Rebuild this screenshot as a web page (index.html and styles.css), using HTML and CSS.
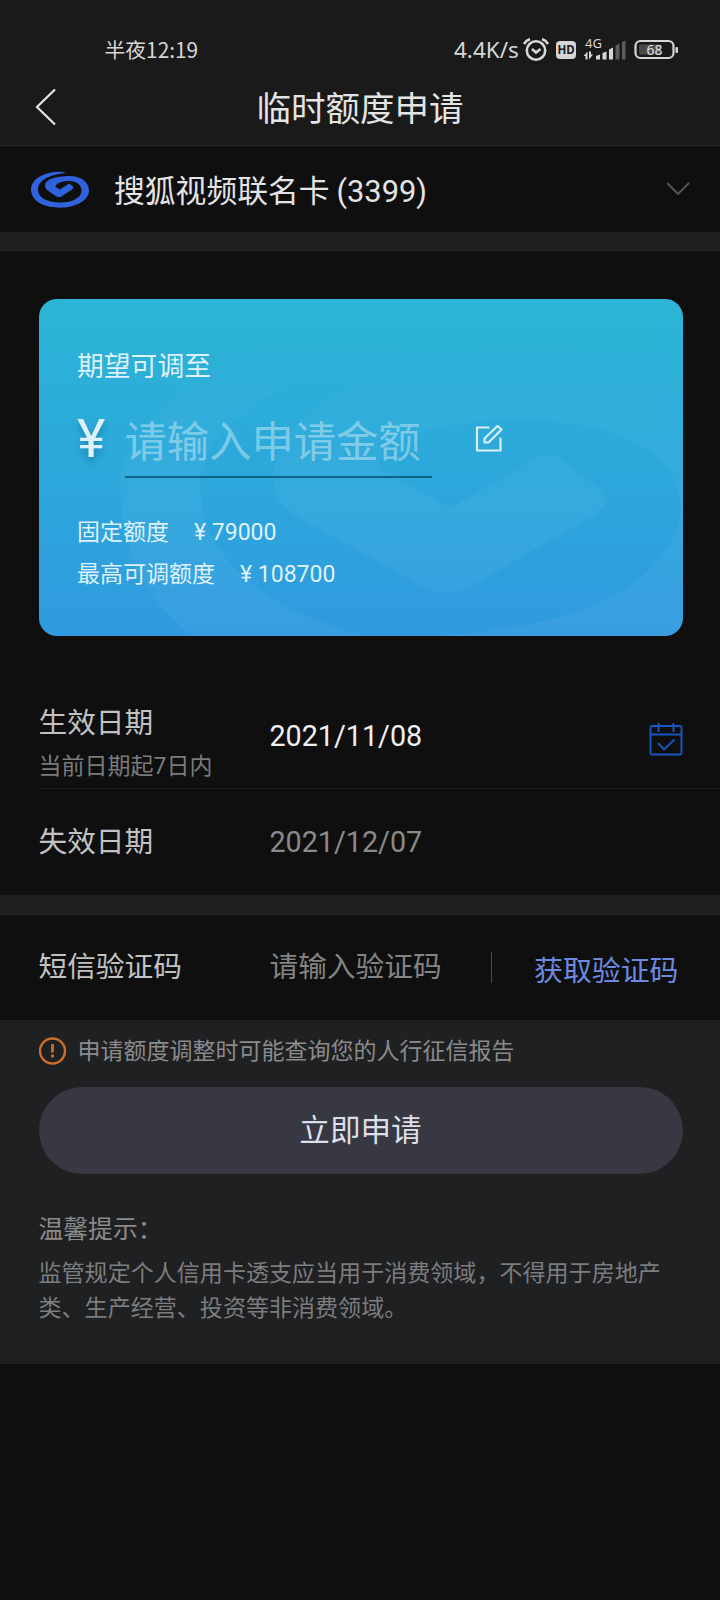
FILE: index.html
```html
<!DOCTYPE html>
<html lang="zh-CN">
<head>
<meta charset="utf-8">
<title>临时额度申请</title>
<link rel="stylesheet" href="styles.css">
</head>
<body>
<header class="header">
  <div class="status">
    <span class="clock">半夜12:19</span>
    <span class="speed">4.4K/s</span>
    <svg class="status-icons" width="160" height="30" viewBox="520 35 160 30">
      <g fill="none" stroke="#d6d6d6" stroke-width="2.6">
        <circle cx="536" cy="50.500" r="9.200"/>
        <path d="M532 49l4 3.500 4.500-3.500"/>
        <path d="M524 44q2-3.500 6-5M548 44q-2-3.500-6-5"/>
      </g>
      <rect x="556" y="41" width="20" height="18" rx="4" fill="#d6d6d6"/>
      <text x="566" y="53.800" class="hd">HD</text>
      <text x="585" y="48" class="net">4G</text>
      <g fill="#d6d6d6">
        <path d="M583.500 56l4-4.500v8h-2v-3.500zM593 54.500l-1.500 2-2.500 3v-8h2v3z"/>
        <path d="M596 56l4-1.500v5h-4zM602.500 53l4-1.500v8h-4zM609 49.500l4-2v12h-4z"/>
        <path fill="#5c5c5c" d="M615.500 45.500l4-2v16h-4zM622 42l3.500-1.500v19H622z"/>
      </g>
      <rect x="635.500" y="41" width="38" height="17" rx="5" fill="none" stroke="#d6d6d6" stroke-width="2.200"/>
      <rect x="639" y="44.500" width="22" height="10" rx="1" fill="#4a4a4a"/>
      <rect x="675.500" y="47" width="2.500" height="6" rx="1" fill="#d6d6d6"/>
      <text x="654.500" y="54.800" class="battery">68</text>
    </svg>
  </div>
  <div class="nav">
    <svg class="back" width="22" height="38" viewBox="0 0 22 38"><path d="M20 1.500L2 19l18 17.500" fill="none" stroke="#e6e6e6" stroke-width="2.200"/></svg>
    <h1 class="title">临时额度申请</h1>
  </div>
</header>

<section class="account">
  <svg class="logo" width="58" height="38" viewBox="0 0 58 38">
    <path fill="#2f62dc" d="M36 3C31 1.500 25 1 18 3 8 5.500 0 11 0 19.500 0 31 13 37.700 28.500 37.700S58 31 58 20.500C58 12 50 6 38 6 25 6 14 9.500 14 15.500c0 3 2 4.500 4 6l7.500 5q2.500 1.500 5 0l11-7.500q2-1.500 0-3L38 13.500l-9 6-4.500-2.500c0-3.500 6-6 13.500-6 8 0 12.500 4 12.500 9.500 0 7.500-9 12-21.500 12C16 32.500 7 27.500 7 19.500 7 11 17 4.500 36 3z"/>
  </svg>
  <span class="account-name">搜狐视频联名卡 <span class="num">(3399)</span></span>
  <svg width="26" height="16" viewBox="0 0 26 16"><path d="M2 2l11 11L24 2" fill="none" stroke="#565656" stroke-width="1.800"/></svg>
</section>

<section class="quota-wrap">
  <div class="quota">
    <svg class="mark" width="644" height="337" viewBox="38.500 299 644 337">
      <defs>
        <linearGradient id="fade" gradientUnits="userSpaceOnUse" x1="0" y1="330" x2="0" y2="500">
          <stop offset="0" stop-color="#fff" stop-opacity="0"/>
          <stop offset="1" stop-color="#fff" stop-opacity=".042"/>
        </linearGradient>
      </defs>
      <path fill="url(#fade)" d="M683 315C640 305 560 300 480 305 280 315 120 390 120 490c0 60 25 110 72 146H365C265 610 200 560 200 485c0-40 40-90 150-125 90-25 200-40 333-45z"/>
      <path fill="url(#fade)" d="M683 370C620 352 560 348 500 350 380 355 273 410 273 480c0 20 12 30 30 40l122 68q20 9 42 0l130-75q15-13 0-26l-40-30q-9-6-20 0L450 508l-70-40C370 440 440 420 520 420c100 0 160 35 160 85 0 75-100 125-250 131H683z"/>
    </svg>
    <p class="quota-label">期望可调至</p>
    <div class="amount">
      <span class="yen">¥</span>
      <span class="amount-input">请输入申请金额</span>
      <svg class="edit" width="28" height="29" viewBox="0 0 28 29" fill="none" stroke="#d9f0fa" stroke-width="2.200"><path d="M14.500 3.500H2v23h23.500V13.500"/><path d="M9.500 18.500v-4L22.500 2l4 3.500L13.500 18.500z" stroke-linejoin="round"/></svg>
    </div>
    <p class="limit">固定额度<span class="num limit-value">¥ 79000</span></p>
    <p class="limit">最高可调额度<span class="num limit-value">¥ 108700</span></p>
  </div>
</section>

<section class="dates">
  <div class="row row-start">
    <div class="label-col"><div class="label">生效日期</div><div class="hint">当前日期起<span class="num">7</span>日内</div></div>
    <span class="date num">2021/11/08</span>
    <svg class="calendar" width="34" height="34" viewBox="0 0 34 34" fill="none" stroke="#1757c0" stroke-width="1.900"><rect x="1.500" y="4" width="31" height="28.500" rx="1.500"/><path d="M1.500 12.500h31M9.500 1v9M24.500 1v9M9 21l6 6.500L25.500 17.500"/></svg>
  </div>
  <div class="row row-end">
    <div class="label-col"><div class="label">失效日期</div></div>
    <span class="date date-off num">2021/12/07</span>
  </div>
</section>

<section class="sms">
  <div class="label-col"><div class="label">短信验证码</div></div>
  <span class="code-input">请输入验证码</span>
  <span class="bar"></span>
  <a class="get-code">获取验证码</a>
</section>

<section class="footer">
  <div class="notice">
    <svg width="28" height="28" viewBox="0 0 28 28"><circle cx="13.500" cy="14" r="12.500" fill="none" stroke="#c96f2c" stroke-width="2.400"/><path d="M13.500 7v8.500M13.500 17.500v3" stroke="#c96f2c" stroke-width="2.800"/></svg>
    <span class="notice-text">申请额度调整时可能查询您的人行征信报告</span>
  </div>
  <div class="submit">立即申请</div>
  <h2 class="tips-title">温馨提示：</h2>
  <p class="tips">监管规定个人信用卡透支应当用于消费领域，不得用于房地产类、生产经营、投资等非消费领域。</p>
</section>
</body>
</html>
```

FILE: styles.css
```css
* { box-sizing: border-box; }
body {
  margin: 0;
  width: 720px;
  height: 1600px;
  overflow: hidden;
  background: #0f0f0f;
  color: #e4e4e4;
  font-family: "Noto Sans CJK SC", sans-serif;
}
h1, h2, p { margin: 0; font-weight: 400; }
svg { display: block; flex: none; }
.num { font-family: Roboto, sans-serif; }

.header { height: 146px; background: #1a1a1a; border-bottom: 1px solid #262626; }
.status { display: flex; height: 72px; padding: 35px 0 0 104.500px; line-height: 30px; color: #d6d6d6; }
.clock { width: 349.500px; font-size: 20.800px; line-height: 29px; }
.speed { width: 66px; font: 22.500px/30px "Noto Sans", sans-serif; }
.hd { font: 700 11.500px "Noto Sans", sans-serif; text-anchor: middle; fill: #1a1a1a; }
.net { font: 13px "Noto Sans", sans-serif; fill: #d6d6d6; }
.battery { font: 14px "Noto Sans", sans-serif; text-anchor: middle; fill: #e0e0e0; }
.nav { display: grid; grid-template-columns: 58px 1fr 58px; height: 70px; align-items: center; }
.back { margin-left: 35px; }
.title { font-size: 34.500px; line-height: 50px; text-align: center; margin-top: -2px; }

.account { display: flex; align-items: center; height: 86px; padding: 0 29px 0 31px; }
.account-name { flex: 1; margin: 2px 0 0 25px; font-size: 30.800px; line-height: 44px; white-space: nowrap; }

.quota-wrap { padding: 48px 37.500px 0 38.500px; border-top: 19px solid #1f2022; }
.quota {
  position: relative;
  height: 337px;
  padding: 45px 38.500px 0;
  overflow: hidden;
  border-radius: 18px;
  background: linear-gradient(#2cb5d6, #2ca8db 50%, #309ae0);
  color: #dff1fa;
}
.mark { position: absolute; left: 0; top: 0; }
.quota-label { position: relative; font-size: 26.800px; line-height: 41px; }
.amount { position: relative; display: flex; height: 93px; }
.yen { width: 47.500px; font: 54px/107px Roboto, sans-serif; text-shadow: 0 5px 6px rgba(0, 60, 110, .35); }
.amount-input { width: 307px; border-bottom: 2px solid #0f6289; font-size: 42.300px; line-height: 107px; color: rgba(255, 255, 255, .4); white-space: nowrap; }
.edit { margin: 39px 0 0 43px; }
.limit { position: relative; height: 42px; font-size: 23px; line-height: 42px; }
.limit-value { margin-left: 25px; line-height: 30px; }
.amount + .limit { margin-top: 31px; }

.dates { height: 279px; padding: 0 0 0 38.500px; border-bottom: 20px solid #1f2022; }
.row { display: flex; }
.row-start { height: 153px; padding-top: 65px; border-bottom: 1px solid #1b1b1b; }
.label-col { width: 231px; }
.label { font-size: 28.700px; line-height: 40px; color: #c2c2c2; white-space: nowrap; }
.hint { margin-top: 5px; font-size: 23px; line-height: 36px; color: #7b7b7b; }
.date { width: 379px; font-size: 28.700px; line-height: 40px; color: #efefef; }
.row-start .date { margin-top: 15px; }
.date-off { color: #8a8a8a; }
.calendar { margin-top: 21px; }
.row-end { align-items: center; height: 105px; }
.row-end .label { margin-top: -4px; }

.sms { display: flex; align-items: center; height: 105px; padding-left: 38.500px; }
.sms .label, .code-input { margin-top: -6px; }
.code-input { width: 221px; font-size: 28.700px; line-height: 40px; color: #848484; }
.bar { width: 1px; height: 31px; background: #4b4b4b; }
.get-code { margin: 1px 0 0 42.500px; font-size: 28.900px; line-height: 40px; color: #6c8ae0; }

.footer { height: 344px; padding: 13px 37.500px 0 38.500px; background: #1f2022; }
.notice { display: flex; gap: 11px; align-items: center; height: 36px; font-size: 23px; line-height: 34px; color: #8b8b8b; }
.notice-text { margin-top: -4px; }
.submit { height: 87px; margin-top: 18px; border-radius: 44px; background: #373841; font-size: 30.600px; line-height: 82px; text-align: center; color: #dcdee8; }
.tips-title { margin-top: 35px; font-size: 24.800px; line-height: 36px; color: #8b8b8b; }
.tips { margin-top: 9px; padding-right: 12px; font-size: 23.050px; line-height: 34.500px; color: #7c7d7f; }
```
